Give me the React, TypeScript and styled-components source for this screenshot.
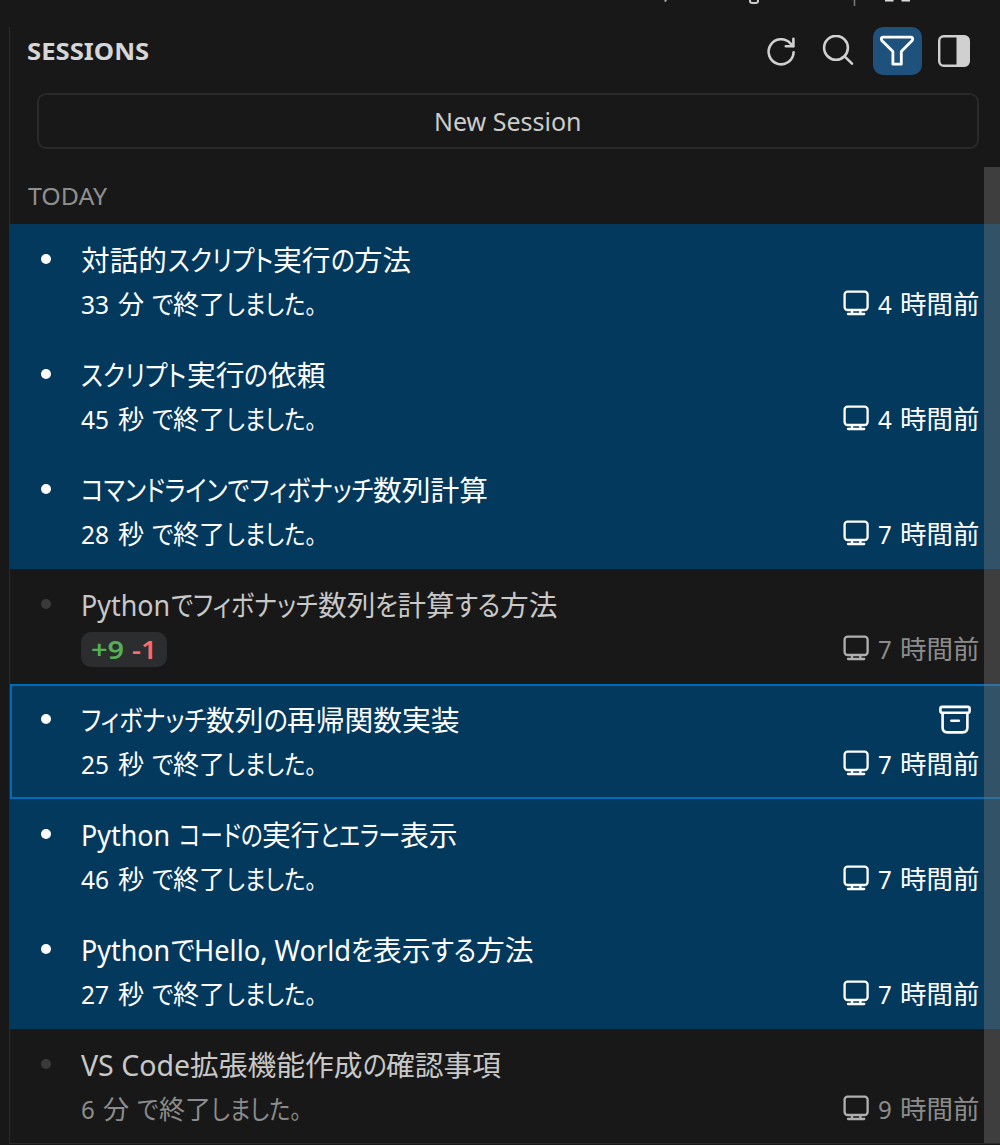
import React, { useLayoutEffect, useRef, useState } from "react";
import styled, { createGlobalStyle, css } from "styled-components";

const GlobalStyle = createGlobalStyle`
  * { box-sizing: border-box; }
  html, body { margin: 0; padding: 0; background: #181818; }
  body {
    overflow: hidden;
    font-family: "Noto Sans", "Noto Sans CJK JP", sans-serif;
    color: #cccccc;
  }
`;

const Window = styled.div`
  width: 1000px;
  height: 1145px;
  overflow: hidden;
  display: flex;
  flex-direction: column;
  background: #181818;
`;

const TitleStrip = styled.div`
  flex: none;
  height: 27px;
`;

const Panel = styled.section`
  flex: none;
  height: 1117px;
  margin-left: 9px;
  border-left: 1px solid #2b2b2b;
  border-bottom: 1px solid #2b2b2b;
  display: flex;
  flex-direction: column;
`;

const Header = styled.header`
  flex: none;
  height: 48px;
  padding: 0 22px 0 17px;
  display: flex;
  align-items: center;
  justify-content: space-between;
`;

const Heading = styled.h2`
  margin: 0;
  font-size: 24px;
  line-height: 48px;
  font-weight: 700;
  color: #d6d6d6;
`;

const Toolbar = styled.div`
  display: flex;
  align-items: center;
  gap: 8px;
`;

const ToolButton = styled.button<{ $active?: boolean }>`
  width: 48.5px;
  height: 48px;
  padding: 0;
  border: 0;
  border-radius: 10px;
  display: grid;
  place-items: center;
  margin-left: ${(p) => (p.$active ? "3px" : "0")};
  color: ${(p) => (p.$active ? "#ffffff" : "#d0d0d0")};
  background: ${(p) => (p.$active ? "#1e527c" : "transparent")};
`;

const NewSession = styled.button`
  flex: none;
  height: 56px;
  margin: 18px 21px 0 27px;
  padding: 0;
  border: 2px solid #292929;
  border-radius: 9px;
  background: transparent;
  color: #cccccc;
  font-family: inherit;
  font-size: 25.5px;
  display: flex;
  align-items: center;
  justify-content: center;
`;

const ScrollArea = styled.div`
  position: relative;
  margin-top: 18px;
  flex: 1;
  min-height: 0;
  overflow: hidden;
`;

const Scrollbar = styled.div`
  position: absolute;
  top: 0;
  right: 0;
  bottom: 0;
  width: 16px;
  background: rgba(121, 121, 121, 0.4);
`;

const GroupLabel = styled.div`
  height: 57px;
  padding: 0 0 0 18px;
  line-height: 58px;
  font-size: 24px;
  color: #8f8f8f;
`;

const Row = styled.article<{ $selected?: boolean; $focused?: boolean }>`
  height: 115px;
  padding: 14px 21px 0 30px;
  display: grid;
  grid-template-columns: 41px 1fr;
  ${(p) =>
    p.$selected
      ? css`
          background: #04395e;
          color: #ffffff;
        `
      : css`
          color: #c8c8c8;
        `}
  ${(p) =>
    p.$focused &&
    css`
      box-shadow: inset 0 2px #006bb9, inset 2px 0 #006bb9, inset 0 -2px #006bb9;
    `}
`;

const Dot = styled.span<{ $on?: boolean }>`
  width: 10px;
  height: 10px;
  margin: 16px 0 0 1px;
  border-radius: 50%;
  background: ${(p) => (p.$on ? "#ffffff" : "#3a3a3a")};
`;

const Body = styled.div`
  display: grid;
  grid-template-rows: 44px 44px;
  min-width: 0;
`;

const Line = styled.div<{ $muted?: boolean }>`
  display: flex;
  align-items: center;
  justify-content: space-between;
  color: ${(p) => (p.$muted ? "#8c8c8c" : "inherit")};
`;

const Title = styled.div`
  display: flex;
  align-items: baseline;
  font-size: 28.5px;
  line-height: 44px;
  height: 44px;
`;

const Detail = styled.div`
  display: flex;
  align-items: baseline;
  font-size: 25.8px;
  line-height: 45px;
  height: 44px;
`;

const Age = styled(Detail)`
  width: 136px;
`;

const MonitorSlot = styled.span<{ $muted?: boolean }>`
  width: 35px;
  height: 26px;
  margin-bottom: 2px;
  align-self: center;
  display: flex;
  color: ${(p) => (p.$muted ? "#b0b0b0" : "inherit")};
`;

const ArchiveButton = styled.span`
  width: 32px;
  height: 30px;
  margin-right: 8px;
  display: flex;
`;

const Badge = styled.span`
  height: 35px;
  width: 86px;
  border-radius: 10px;
  background: #2c2d2e;
  display: flex;
  align-items: center;
  justify-content: center;
  gap: 8px;
  font-size: 24.5px;
  font-weight: 600;
`;

const Delta = styled.span<{ $kind: "add" | "del" }>`
  color: ${(p) => (p.$kind === "add" ? "#54b054" : "#fc6a6a")};
`;

const RunBox = styled.span`
  display: inline-block;
  white-space: pre;
  flex: none;
`;

const RunText = styled.span`
  display: inline-block;
  white-space: pre;
  transform-origin: 0 50%;
  font-feature-settings: "palt";
`;

type RunData = [string, number];

function Run({ text, width }: { text: string; width: number }) {
  const ref = useRef<HTMLSpanElement>(null);
  const [scale, setScale] = useState(1);
  useLayoutEffect(() => {
    if (ref.current) setScale(width / ref.current.offsetWidth);
  }, [text, width]);
  return (
    <RunBox style={{ width }}>
      <RunText ref={ref} style={{ transform: `scaleX(${scale})` }}>
        {text}
      </RunText>
    </RunBox>
  );
}

const Runs = ({ items }: { items: RunData[] }) => (
  <>
    {items.map(([text, width], i) => (
      <Run key={i} text={text} width={width} />
    ))}
  </>
);

const RefreshIcon = () => (
  <svg width="32" height="32" viewBox="0 0 32 32" fill="none" stroke="currentColor" strokeWidth="2.6" strokeLinecap="round" strokeLinejoin="round">
    <path d="M28.6 17.2A12.5 12.5 0 1 1 25.4 8.4L28.2 11.2" />
    <path d="M28.4 3.8V11.2H20.8" />
  </svg>
);

const SearchIcon = () => (
  <svg width="32" height="32" viewBox="0 0 32 32" fill="none" stroke="currentColor" strokeWidth="2.6" strokeLinecap="round">
    <circle cx="14" cy="12.8" r="11.9" />
    <path d="M22.6 21.4L30 28.6" />
  </svg>
);

const FilterIcon = () => (
  <svg width="36" height="34" viewBox="0 0 36 34" fill="none" stroke="currentColor" strokeWidth="2.8" strokeLinejoin="round">
    <path d="M4.3 3.2H31.7Q34 3.2 33.6 5.4Q33.4 6.4 32.2 7.6L22.3 17.6V30.2H13.9V17.6L3.8 7.6Q2.6 6.4 2.4 5.4Q2 3.2 4.3 3.2Z" />
  </svg>
);

const LayoutIcon = () => (
  <svg width="34" height="34" viewBox="0 0 34 34" fill="none">
    <rect x="2.2" y="2.2" width="29.6" height="29.6" rx="4.5" stroke="currentColor" strokeWidth="2.4" />
    <path d="M19.5 2H28Q32 2 32 6V28Q32 32 28 32H19.5Z" fill="currentColor" />
  </svg>
);

const MonitorIcon = () => (
  <svg width="26" height="26" viewBox="0 0 26 26" fill="none" stroke="currentColor" strokeWidth="2.3" strokeLinecap="round">
    <rect x="1.6" y="1.6" width="23" height="18.4" rx="3" />
    <path d="M9 20.2V24M17.4 20.2V24M5 24H21.2" />
  </svg>
);

const ArchiveIcon = () => (
  <svg width="32" height="30" viewBox="0 0 32 30" fill="none" stroke="currentColor" strokeWidth="2.6" strokeLinecap="round" strokeLinejoin="round">
    <rect x="1.4" y="1.9" width="29.2" height="5.8" rx="1.8" />
    <path d="M3.6 8V22.6Q3.6 27.4 8.4 27.4H23.6Q28.4 27.4 28.4 22.6V8" />
    <path d="M12.4 15.8H19.8" />
  </svg>
);

const StripMarks = () => (
  <svg width="1000" height="8" viewBox="0 0 1000 8" fill="none" display="block">
    <path d="M664.5 0H667L666 1.8H664.5Z" fill="#aaaaaa" />
    <path d="M750 0V1Q750 3 752.5 3H755.5Q758 3 758 1V0" stroke="#cccccc" strokeWidth="2" />
    <path d="M854.5 0V6" stroke="#777777" strokeWidth="1.6" />
    <path d="M885 .6H893.5M901.5 .6H910" stroke="#dddddd" strokeWidth="1.8" />
  </svg>
);

interface Session {
  title: RunData[];
  detail?: RunData[];
  diff?: [string, string];
  hours: string;
  selected?: boolean;
  focused?: boolean;
}

const finished = (count: string, unit: string): RunData[] => [
  [count, count.length > 1 ? 28.5 : 14],
  [" ", 8],
  [unit, 26.3],
  [" ", 8],
  ["で", 21.5],
  ["終了", 52.5],
  ["しました。", 90.5],
];

const sessions: Session[] = [
  { title: [["対話的", 86.5], ["スクリプト", 105.5], ["実行", 57.5], ["の", 23.5], ["方法", 57]], detail: finished("33", "分"), hours: "4", selected: true },
  { title: [["スクリプト", 105.5], ["実行", 57.5], ["の", 23.5], ["依頼", 57.5]], detail: finished("45", "秒"), hours: "4", selected: true },
  { title: [["コマンドラインでフィボナッチ", 292], ["数列計算", 115]], detail: finished("28", "秒"), hours: "7", selected: true },
  { title: [["Python", 89.5], ["でフィボナッチ", 147], ["数列", 57.5], ["を", 22.5], ["計算", 57], ["する", 45], ["方法", 57.5]], diff: ["+9", "-1"], hours: "7" },
  { title: [["フィボナッチ", 125], ["数列", 57.5], ["の", 23.5], ["再帰関数実装", 172.5]], detail: finished("25", "秒"), hours: "7", selected: true, focused: true },
  { title: [["Python", 89.5], [" ", 8], ["コードの", 83.5], ["実行", 57.5], ["とエラー", 80], ["表示", 57.5]], detail: finished("46", "秒"), hours: "7", selected: true },
  { title: [["Python", 89.5], ["で", 23.5], ["Hello, World", 157], ["を", 22], ["表示", 57.5], ["する", 45], ["方法", 57.5]], detail: finished("27", "秒"), hours: "7", selected: true },
  { title: [["VS Code", 109], ["拡張機能作成", 172.5], ["の", 23.5], ["確認事項", 115]], detail: finished("6", "分"), hours: "9" },
];

const SessionRow = ({ s }: { s: Session }) => (
  <Row $selected={s.selected} $focused={s.focused}>
    <Dot $on={s.selected} />
    <Body>
      <Line>
        <Title><Runs items={s.title} /></Title>
        {s.focused && <ArchiveButton><ArchiveIcon /></ArchiveButton>}
      </Line>
      <Line $muted={!s.selected}>
        {s.detail && <Detail><Runs items={s.detail} /></Detail>}
        {s.diff && (
          <Badge>
            <Delta $kind="add"><Run text={s.diff[0]} width={33} /></Delta>
            <Delta $kind="del"><Run text={s.diff[1]} width={25} /></Delta>
          </Badge>
        )}
        <Age>
          <MonitorSlot $muted={!s.selected}><MonitorIcon /></MonitorSlot>
          <Runs items={[[s.hours, 14], [" ", 8], ["時間前", 79]]} />
        </Age>
      </Line>
    </Body>
  </Row>
);

export default function App() {
  return (
    <Window>
      <GlobalStyle />
      <TitleStrip><StripMarks /></TitleStrip>
      <Panel>
        <Header>
          <Heading><Run text="SESSIONS" width={122} /></Heading>
          <Toolbar>
            <ToolButton><RefreshIcon /></ToolButton>
            <ToolButton><SearchIcon /></ToolButton>
            <ToolButton $active><FilterIcon /></ToolButton>
            <ToolButton><LayoutIcon /></ToolButton>
          </Toolbar>
        </Header>
        <NewSession><Run text="New Session" width={148} /></NewSession>
        <ScrollArea>
          <GroupLabel><Run text="TODAY" width={79} /></GroupLabel>
          {sessions.map((s, i) => (
            <SessionRow key={i} s={s} />
          ))}
          <Scrollbar />
        </ScrollArea>
      </Panel>
    </Window>
  );
}
